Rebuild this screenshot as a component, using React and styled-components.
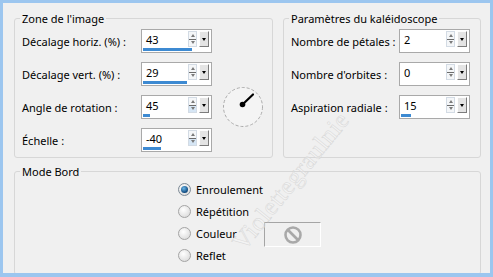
import React from 'react';
import styled, { createGlobalStyle } from 'styled-components';

const GlobalStyle = createGlobalStyle`
  html, body {
    margin: 0;
    padding: 0;
    background: #f0f0f0;
  }
  body {
    font-family: "Noto Sans", "Open Sans", sans-serif;
    font-size: 11px;
    color: #000;
  }
`;

const Window = styled.div`
  position: relative;
  box-sizing: border-box;
  width: 493px;
  height: 277px;
  border: 3px solid #9cc6ef;
  border-bottom-width: 4px;
  background: #f0f0f0;
  padding: 8px 9px 6px 11px;
  overflow: hidden;
`;

const TopRow = styled.div`
  display: flex;
  gap: 10px;
  align-items: stretch;
`;

const Group = styled.fieldset`
  box-sizing: border-box;
  margin: 0;
  min-width: 0;
  width: ${(p) => p.$width || 'auto'};
  padding: 3px 7px 5px 7px;
  border: 1px solid #d7d7d7;
  border-radius: 3px;
`;

const Legend = styled.legend`
  padding: 0 2px;
  margin-left: -2px;
  line-height: 15px;
  font-size: 11px;
`;

const FieldGrid = styled.div`
  display: grid;
  grid-template-columns: ${(p) => p.$labelWidth}px 71px 1fr;
  grid-auto-rows: 24px;
  row-gap: 9px;
  align-items: center;
`;

const Label = styled.span`
  white-space: nowrap;
`;

const SpinFrame = styled.div`
  box-sizing: border-box;
  width: 71px;
  height: 24px;
  border: 1px solid #a9a9a9;
  background: #fff;
  padding: 1px 2px 1px 1px;
  display: flex;
  flex-direction: column;
`;

const SpinTop = styled.div`
  display: flex;
  height: 17px;
  align-items: stretch;
`;

const SpinValue = styled.span`
  flex: 1;
  padding-left: 3px;
  display: flex;
  align-items: center;
  font-size: 11px;
`;

const Arrows = styled.div`
  box-sizing: border-box;
  width: 9px;
  display: flex;
  flex-direction: column;
  border: 1px solid #d3dbe4;
  background: #f4f6f8;
`;

const ArrowHalf = styled.div`
  flex: 1;
  display: flex;
  align-items: center;
  justify-content: center;
  background: ${(p) => (p.$active ? '#d6e6f5' : 'transparent')};
  & + & {
    border-top: 1px solid #6c6c6c;
  }
  &::after {
    content: '';
    border-left: 2.5px solid transparent;
    border-right: 2.5px solid transparent;
    ${(p) =>
      p.$up
        ? 'border-bottom: 3px solid #7a7a7a;'
        : 'border-top: 3px solid #7a7a7a;'}
  }
`;

const DropButton = styled.div`
  box-sizing: border-box;
  width: 10px;
  height: 16px;
  margin-left: 2px;
  align-self: center;
  border: 1px solid;
  border-color: #fdfdfd #7c7c7c #7c7c7c #fdfdfd;
  background: #e4e4e4;
  display: flex;
  align-items: center;
  justify-content: center;
  &::after {
    content: '';
    border-left: 2.5px solid transparent;
    border-right: 2.5px solid transparent;
    border-top: 3px solid #000;
  }
`;

const Track = styled.div`
  margin-top: 1px;
  height: 3px;
`;

const Bar = styled.div`
  height: 100%;
  background: #3d8ad2;
`;

const DialCell = styled.div`
  grid-column: 3;
  grid-row: 2 / 5;
  align-self: center;
  margin-left: 10px;
  display: flex;
`;

const RadioGrid = styled.div`
  display: grid;
  grid-template-columns: 86px auto;
  grid-template-rows: repeat(4, 22px);
  margin: -4px 0 0 156px;
  padding-bottom: 3px;
`;

const RadioOption = styled.label`
  grid-column: 1;
  display: flex;
  align-items: center;
  gap: 5px;
  white-space: nowrap;
`;

const RadioDot = styled.span`
  box-sizing: border-box;
  width: 13px;
  height: 13px;
  border-radius: 50%;
  border: 1px solid ${(p) => (p.$checked ? '#7d8a96' : '#a4a4a4')};
  background: radial-gradient(circle at 40% 35%, #ffffff, #d4d4d4);
  display: flex;
  align-items: center;
  justify-content: center;
  &::after {
    content: '';
    display: ${(p) => (p.$checked ? 'block' : 'none')};
    width: 7px;
    height: 7px;
    border-radius: 50%;
    background: radial-gradient(circle at 40% 35%, #6bb8ea, #144f84 65%, #0c3560);
  }
`;

const Swatch = styled.div`
  grid-column: 2;
  grid-row: 3;
  align-self: center;
  margin-top: 3px;
  box-sizing: border-box;
  width: 57px;
  height: 25px;
  border: 1px solid;
  border-color: #a5a5a5 #ffffff #ffffff #a5a5a5;
  background: #f0f0f0;
  display: flex;
  align-items: center;
  justify-content: center;
`;

const Watermark = styled.div`
  position: absolute;
  left: 288px;
  top: 178px;
  transform: translate(-50%, -50%) rotate(-51deg);
  font-family: "Liberation Serif", serif;
  font-size: 25px;
  letter-spacing: 0.5px;
  color: rgba(255, 255, 255, 0.25);
  -webkit-text-stroke: 0.5px #d6d6d6;
  white-space: nowrap;
  pointer-events: none;
`;

const SpinBox = ({ value, fill, down }) => (
  <SpinFrame>
    <SpinTop>
      <SpinValue>{value}</SpinValue>
      <Arrows>
        <ArrowHalf $up />
        <ArrowHalf $active={down} />
      </Arrows>
      <DropButton />
    </SpinTop>
    <Track>{fill > 0 && <Bar style={{ width: fill }} />}</Track>
  </SpinFrame>
);

const Dial = () => (
  <svg width="42" height="42" viewBox="0 0 42 42">
    <circle cx="21" cy="21" r="19.5" fill="#f4f4f4" stroke="#acacac" strokeWidth="1" strokeDasharray="3 2" />
    <line x1="20.5" y1="18.5" x2="31" y2="8.5" stroke="#000" strokeWidth="2.2" strokeLinecap="round" />
    <circle cx="20.5" cy="18.5" r="2.8" fill="#000" />
  </svg>
);

const NoSign = () => (
  <svg width="20" height="20" viewBox="0 0 20 20">
    <circle cx="10" cy="10" r="7.5" fill="none" stroke="#a9a9a9" strokeWidth="2.6" />
    <line x1="5" y1="5" x2="15" y2="15" stroke="#a9a9a9" strokeWidth="2.6" />
  </svg>
);

const zoneFields = [
  { label: 'Décalage horiz. (%) :', value: '43', fill: 49 },
  { label: 'Décalage vert. (%) :', value: '29', fill: 44 },
  { label: 'Angle de rotation :', value: '45', fill: 7, down: true },
  { label: 'Échelle :', value: '-40', fill: 18, down: true },
];

const kaleidoFields = [
  { label: 'Nombre de pétales :', value: '2', fill: 0 },
  { label: "Nombre d'orbites :", value: '0', fill: 0 },
  { label: 'Aspiration radiale :', value: '15', fill: 10 },
];

const modes = ['Enroulement', 'Répétition', 'Couleur', 'Reflet'];

const App = () => (
  <>
    <GlobalStyle />
    <Window>
      <TopRow>
        <Group $width="259px">
          <Legend>Zone de l'image</Legend>
          <FieldGrid $labelWidth={119}>
            {zoneFields.map((f) => (
              <React.Fragment key={f.label}>
                <Label style={{ gridColumn: 1 }}>{f.label}</Label>
                <SpinBox value={f.value} fill={f.fill} down={f.down} />
              </React.Fragment>
            ))}
            <DialCell>
              <Dial />
            </DialCell>
          </FieldGrid>
        </Group>
        <Group $width="198px">
          <Legend>Paramètres du kaléidoscope</Legend>
          <FieldGrid $labelWidth={108}>
            {kaleidoFields.map((f) => (
              <React.Fragment key={f.label}>
                <Label>{f.label}</Label>
                <SpinBox value={f.value} fill={f.fill} />
                <span />
              </React.Fragment>
            ))}
          </FieldGrid>
        </Group>
      </TopRow>
      <Group style={{ marginTop: 6 }}>
        <Legend>Mode Bord</Legend>
        <RadioGrid>
          {modes.map((m, i) => (
            <RadioOption key={m} style={{ gridRow: i + 1 }}>
              <RadioDot $checked={i === 0} />
              {m}
            </RadioOption>
          ))}
          <Swatch>
            <NoSign />
          </Swatch>
        </RadioGrid>
      </Group>
      <Watermark>Violettegraulnie</Watermark>
    </Window>
  </>
);

export default App;
